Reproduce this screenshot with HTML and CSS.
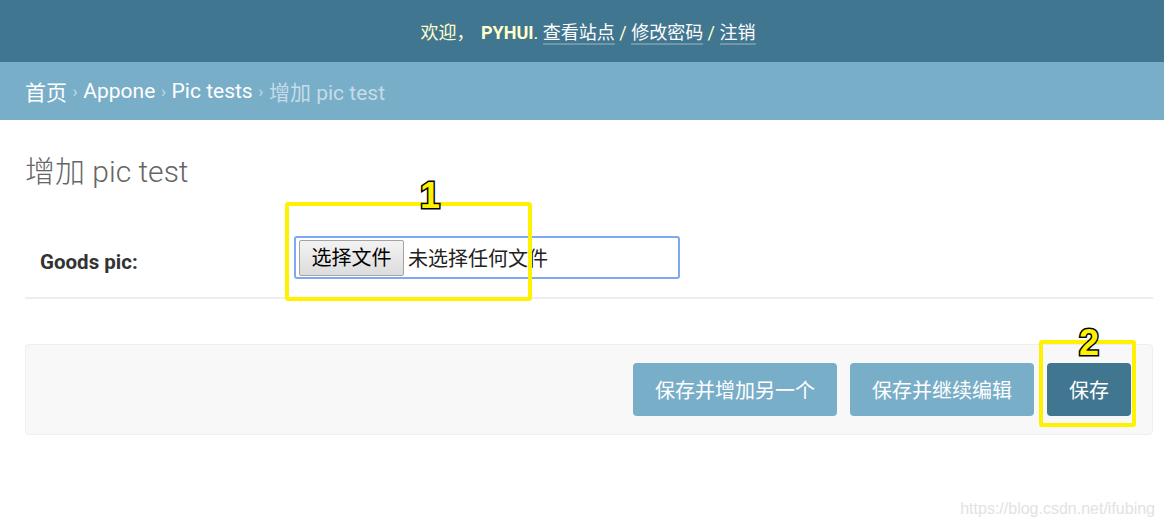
FILE: index.html
```html
<!DOCTYPE html>
<html lang="zh-CN">
<head>
<meta charset="UTF-8">
<title>增加 pic test</title>
<link rel="stylesheet" href="styles.css">
</head>
<body>
  <div id="header">
    <div id="user-tools">
      欢迎， <strong>PYHUI</strong>.
      <a href="#">查看站点</a> /
      <a href="#">修改密码</a> /
      <a href="#">注销</a>
    </div>
  </div>

  <div class="breadcrumbs">
    <a href="#">首页</a>
    <span class="sep">›</span>
    <a href="#">Appone</a>
    <span class="sep">›</span>
    <a href="#">Pic tests</a>
    <span class="sep">›</span>
    <span class="current">增加 pic test</span>
  </div>

  <div id="content">
    <h1>增加 pic test</h1>

    <div class="form-row">
      <label>Goods pic:</label>
      <div class="file-box">
        <span class="file-btn">选择文件</span>
        <span class="file-name">未选择任何文件</span>
      </div>
    </div>

    <div class="submit-row">
      <button class="btn">保存并增加另一个</button>
      <button class="btn">保存并继续编辑</button>
      <button class="btn default">保存</button>
    </div>
  </div>

  <!-- screenshot annotations -->
  <div class="mark mark-1"><span class="num">1</span></div>
  <div class="mark mark-2"><span class="num">2</span></div>

  <div class="watermark">https://blog.csdn.net/ifubing</div>
</body>
</html>
```

FILE: styles.css
```css
body {
  margin: 0;
  font-family: Roboto, "Noto Sans CJK SC", sans-serif;
  color: #333;
  background: #fff;
  height: 526px;
  overflow: hidden;
  position: relative;
}

#header {
  background-color: #417690;
  height: 62px;
  display: flex;
  align-items: center;
  justify-content: center;
}

#user-tools {
  font-size: 18px;
  color: #ffc;
  padding-left: 12px;
}

#user-tools strong {
  font-weight: bold;
  margin-left: 2px;
}

#user-tools a {
  color: #fff;
  text-decoration: none;
  border-bottom: 2px solid rgba(255,255,255,0.25);
}

.breadcrumbs {
  background-color: #79aec8;
  height: 58px;
  display: flex;
  align-items: center;
  padding-left: 25px;
  font-size: 21px;
  color: #c4dce8;
}

.breadcrumbs a {
  color: #fff;
  text-decoration: none;
}

.breadcrumbs .sep {
  margin: 0 5.6px;
  font-size: 17px;
}

#content {
  padding: 0 11px 0 25px;
}

h1 {
  margin: 0;
  padding-top: 33px;
  font-size: 30px;
  font-weight: 300;
  color: #666;
  line-height: 38px;
}

.form-row {
  display: flex;
  align-items: center;
  padding: 45px 0 18px 15px;
  border-bottom: 2px solid #eee;
}

.form-row label {
  width: 254px;
  padding-top: 8px;
  font-size: 20.5px;
  font-weight: bold;
  color: #333;
}

.file-box {
  width: 379px;
  height: 39px;
  border: 2px solid #7ea9f2;
  border-radius: 3px;
  display: flex;
  align-items: center;
  padding-left: 3px;
}

.file-btn {
  display: inline-block;
  width: 103px;
  height: 34px;
  line-height: 34px;
  text-align: center;
  font-size: 20px;
  color: #000;
  border: 1px solid #a3a3a3;
  border-radius: 2px;
  background: linear-gradient(#f3f3f3, #dcdcdc);
}

.file-name {
  margin-left: 4px;
  font-size: 20px;
  color: #222;
}

.submit-row {
  margin-top: 45px;
  height: 91px;
  background: #f8f8f8;
  border: 1px solid #eee;
  border-radius: 4px;
  display: flex;
  justify-content: flex-end;
  align-items: flex-start;
  gap: 13px;
  padding: 18px 21px 0 0;
  box-sizing: border-box;
}

.btn {
  height: 53px;
  padding: 0 22px;
  border: none;
  border-radius: 4px;
  background-color: #79aec8;
  color: #fff;
  font-family: Roboto, "Noto Sans CJK SC", sans-serif;
  font-size: 20px;
  cursor: pointer;
}

.btn.default {
  background-color: #417690;
}

.mark {
  position: absolute;
  border: 4px solid #fff200;
  border-radius: 3px;
  box-sizing: border-box;
}

.mark-1 {
  left: 285px;
  top: 202px;
  width: 247px;
  height: 99px;
}

.mark-2 {
  left: 1039px;
  top: 340px;
  width: 97px;
  height: 87px;
}

.num {
  position: absolute;
  font-family: "Liberation Sans", Arial, sans-serif;
  font-weight: bold;
  font-size: 36px;
  line-height: 36px;
  color: #fff200;
  -webkit-text-stroke: 3px #000;
  paint-order: stroke fill;
}

.mark-1 .num {
  left: 131px;
  top: -28px;
}

.mark-2 .num {
  left: 36px;
  top: -19px;
}

.watermark {
  position: absolute;
  right: 9px;
  bottom: 8px;
  font-family: "Liberation Sans", Arial, sans-serif;
  font-size: 16px;
  color: #e2e2e2;
}
```
